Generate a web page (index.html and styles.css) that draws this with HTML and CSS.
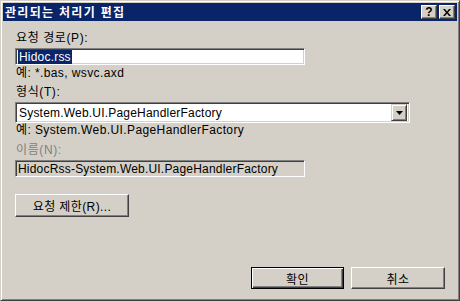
FILE: index.html
```html
<!DOCTYPE html>
<html lang="ko">
<head>
    <meta charset="UTF-8">
    <title>관리되는 처리기 편집</title>
    <link rel="stylesheet" href="styles.css">
</head>
<body>
<div class="window">
    <div class="titlebar">
        <span class="title">관리되는 처리기 편집</span>
        <span class="cap-btn help">?</span>
        <span class="cap-btn close">
            <svg width="8" height="7" viewBox="0 0 8 7"><path d="M0 0h2l2 2.5L6 0h2L5 3.5 8 7H6L4 4.5 2 7H0l3-3.5z" fill="#000"/></svg>
        </span>
    </div>
    <div class="content">
        <div class="label first">요청 경로(P):</div>
        <div class="field edit"><span class="sel">Hidoc.rss</span></div>
        <div class="hint">예: *.bas, wsvc.axd</div>

        <div class="label">형식(T):</div>
        <div class="field combo">
            <span class="combo-text">System.Web.UI.PageHandlerFactory</span>
            <span class="drop"><svg width="7" height="4" viewBox="0 0 7 4"><path d="M0 0h7L3.5 4z" fill="#000"/></svg></span>
        </div>
        <div class="hint tight">예: System.Web.UI.PageHandlerFactory</div>

        <div class="label disabled">이름(N):</div>
        <div class="field edit readonly">HidocRss-System.Web.UI.PageHandlerFactory</div>

        <div class="btn limit">요청 제한(R)...</div>

        <div class="footer">
            <div class="btn default">확인</div>
            <div class="btn">취소</div>
        </div>
    </div>
</div>
</body>
</html>
```

FILE: styles.css
```css
* {
    margin: 0;
    padding: 0;
    box-sizing: border-box;
}

body {
    width: 460px;
    height: 301px;
    overflow: hidden;
    background: #d4d0c8;
    font-family: "Liberation Sans", "Noto Sans CJK KR", sans-serif;
    font-size: 12px;
    color: #000;
}

.window {
    width: 460px;
    height: 301px;
    display: flex;
    flex-direction: column;
    padding: 1px;
    border: 1px solid;
    border-color: #d4d0c8 #404040 #404040 #d4d0c8;
    box-shadow: inset 1px 1px #fff, inset -1px -1px #808080;
}

.titlebar {
    margin: 1px 1px 0 1px;
    height: 18px;
    background: #0a246a;
    display: flex;
    align-items: center;
    padding: 0 2px 0 2px;
}

.title {
    flex: 1;
    color: #fff;
    font-weight: bold;
    font-size: 12px;
    letter-spacing: 1.3px;
    font-family: "Noto Sans CJK KR", sans-serif;
    line-height: 18px;
}

.cap-btn {
    width: 16px;
    height: 14px;
    background: #d4d0c8;
    border: 1px solid;
    border-color: #fff #404040 #404040 #fff;
    box-shadow: inset -1px -1px #808080;
    display: flex;
    align-items: center;
    justify-content: center;
    font-weight: bold;
    font-size: 12px;
    line-height: 12px;
}

.cap-btn.help {
    margin-right: 2px;
}

.content {
    flex: 1;
    display: flex;
    flex-direction: column;
    padding: 0 13px 10px 13px;
}

.label {
    line-height: 14px;
    margin-top: 5px;
    padding-left: 1px;
    letter-spacing: 0.6px;
}

.label.first {
    margin-top: 10px;
}

.label.disabled {
    color: #808080;
    margin-top: 6px;
}

.field {
    margin-top: 3px;
    border: 1px solid;
    border-color: #808080 #fff #fff #808080;
    box-shadow: inset 1px 1px #404040, inset -1px -1px #d4d0c8;
    background: #fff;
    letter-spacing: 0.2px;
}

.edit {
    width: 290px;
    height: 17px;
    line-height: 13px;
    padding: 2px 2px 0 2px;
    white-space: nowrap;
    overflow: hidden;
}

.sel {
    background: #0a246a;
    color: #fff;
    padding: 0 1px;
}

.readonly {
    background: #d4d0c8;
}

.combo {
    width: 395px;
    height: 21px;
    display: flex;
    align-items: center;
    padding: 2px;
}

.combo-text {
    flex: 1;
    padding-left: 1px;
}

.drop {
    width: 16px;
    height: 17px;
    background: #d4d0c8;
    border: 1px solid;
    border-color: #d4d0c8 #404040 #404040 #d4d0c8;
    box-shadow: inset 1px 1px #fff, inset -1px -1px #808080;
    display: flex;
    align-items: center;
    justify-content: center;
}

.hint {
    line-height: 14px;
    margin-top: 1px;
    padding-left: 1px;
    letter-spacing: 0.4px;
}

.hint.tight {
    margin-top: 0;
}

.btn {
    height: 23px;
    border: 1px solid;
    border-color: #fff #404040 #404040 #fff;
    box-shadow: inset -1px -1px #808080;
    display: flex;
    align-items: center;
    justify-content: center;
    letter-spacing: 0.4px;
}

.btn.limit {
    margin-top: 17px;
    width: 114px;
}

.footer {
    margin-top: auto;
    display: flex;
    justify-content: flex-end;
    gap: 7px;
}

.footer .btn {
    width: 94px;
    height: 22px;
}

.btn.default {
    border: 1px solid #000;
    box-shadow: inset 1px 1px #fff, inset -1px -1px #404040, inset -2px -2px #808080;
    width: 93px;
}
```
